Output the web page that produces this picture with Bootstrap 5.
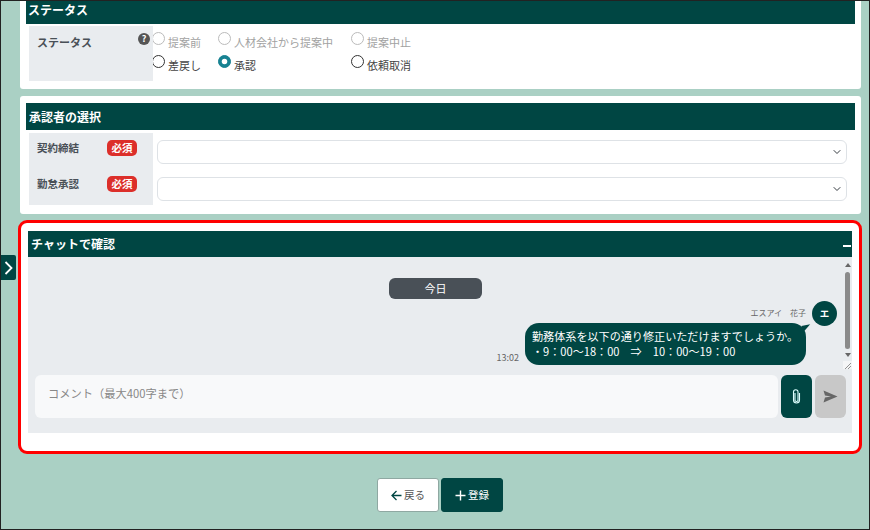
<!DOCTYPE html>
<html lang="ja">
<head>
  <meta charset="UTF-8">
  <meta name="viewport" content="width=device-width, initial-scale=1.0">
  <title>チャットで確認</title>
  <link href="https://cdn.jsdelivr.net/npm/bootstrap@5.3.0/dist/css/bootstrap.min.css" rel="stylesheet">
  <style>
    html, body { height: 530px; overflow: hidden; }
    body { background: #aad0c4; font-family: "Noto Sans CJK JP", "Liberation Sans", sans-serif; font-size: 11px; color: #343a40; }
    .page-frame { height: 530px; border: 1px solid #222; padding: 0 8px 0 19px; position: relative; }
    .box { background: #fff; border-radius: 3px; padding: 7px 6px 0 6px; }
    .box-first { height: 88px; padding-top: 0; border-radius: 0 0 3px 3px; }
    .box-second { height: 118px; margin-top: 7px; }
    .box-chat { height: 234px; margin: 6px -1px 0 -2px; border: 3px solid #f00; border-radius: 9px; padding: 8px 7px 0 7px; }
    .head-bar { background: #004643; color: #fff; font-weight: 700; font-size: 12px; height: 27px; line-height: 27px; padding-left: 3px; display: flex; justify-content: space-between; }
    .box-first .head-bar { height: 23px; line-height: 18px; margin-bottom: 2px; padding-left: 2px; }
    .box-chat .head-bar { height: 26px; line-height: 26px; }
    .head-minus { width: 8px; height: 2px; background: #fff; margin: 14px 1px 0 0; }
    .side-cell { background: #e9ecef; width: 124px; margin-left: 3px; font-weight: 700; color: #495057; flex-shrink: 0; }
    .status-cell { height: 55px; padding: 8px 9px 0 8px; position: relative; }
    .help-dot { position: absolute; right: 3px; top: 7px; width: 12px; height: 12px; border-radius: 50%; background: #555; color: #fff; font-size: 9px; line-height: 12px; text-align: center; font-weight: 700; }
    .radio-grid { display: grid; grid-template-columns: 66px 133px 80px; grid-auto-rows: 23px; padding-top: 5px; margin-left: -1px; }
    .radio-item { display: flex; align-items: flex-start; gap: 3px; margin: 0; }
    .radio-item .form-check-input { width: 13px; height: 13px; margin: 1px 0 0 0; border-color: #333; flex-shrink: 0; opacity: 1; }
    .radio-item .form-check-input:checked { background-color: #178292; border-color: #178292; }
    .radio-item .form-check-input:disabled { border-color: #bbb; opacity: 1; }
    .radio-item span { margin-top: 3px; line-height: 16px; color: #444; }
    .radio-item.is-off span { color: #a2a2a2; }
    .approver-cell { height: 72px; padding: 7px 16px 0 8px; display: flex; flex-direction: column; gap: 20px; }
    .approver-line { display: flex; justify-content: space-between; align-items: center; height: 16px; font-size: 10.5px; }
    .need-tag { background: #dc2f2a; color: #fff; width: 30px; height: 16px; line-height: 15px; border-radius: 5px; text-align: center; font-size: 10.5px; font-weight: 700; }
    .approver-row { margin-top: 3px; }
    .select-col { flex: 1; padding: 7px 8px 0 4px; display: flex; flex-direction: column; gap: 13px; }
    .select-col .form-select { height: 24px; min-height: 24px; padding: 0 24px 0 8px; font-size: 11px; border-color: #dee2e6; background-position: right 4px center; background-size: 10px 8px; }
    .chat-area { background: #e9ecef; height: 176px; position: relative; padding: 0 6px 0 7px; }
    .chat-scroll { height: 112px; padding-top: 21px; }
    .day-pill { width: 93px; height: 21px; line-height: 20px; margin-left: 354px; text-align: center; border-radius: 6px; color: #fff; background: #495057; }
    .sender-line { display: flex; justify-content: flex-end; align-items: center; height: 25px; margin-top: 2px; padding-right: 9px; font-size: 8px; color: #666; gap: 6px; }
    .sender-name { margin-top: -1px; }
    .sender-badge { width: 25px; height: 25px; line-height: 25px; text-align: center; border-radius: 50%; background: #004643; color: #fff; font-weight: 700; font-size: 9.5px; }
    .msg-line { display: flex; justify-content: flex-end; align-items: flex-end; gap: 6px; padding-right: 40px; margin-top: -3px; }
    .msg-time { font-size: 9px; color: #666; line-height: 13px; margin-bottom: 1px; }
    .msg-bubble { width: 281px; height: 42px; background: #004643; color: #fff; border-radius: 14px; padding: 6px 7px; font-size: 11.1px; line-height: 15px; position: relative; white-space: nowrap; }
    .msg-bubble::after { content: ""; position: absolute; right: -5px; top: 2px; border-left: 9px solid #004643; border-bottom: 7px solid transparent; transform: rotate(-12deg); }
    .scroll-rail { position: absolute; right: 0; top: 0; width: 9px; height: 112px; display: flex; flex-direction: column; align-items: center; }
    .scroll-thumb { width: 5px; height: 77px; border-radius: 3px; background: #8a8a8a; margin: 5px 0 4px; }
    .arrow-up { width: 0; height: 0; margin-top: 6px; border: 3px solid transparent; border-top: 0; border-bottom: 4px solid #666; }
    .arrow-down { width: 0; height: 0; border: 3px solid transparent; border-bottom: 0; border-top: 4px solid #666; }
    .grip { position: absolute; right: 0; bottom: 0; background: #f4f5f6; }
    .input-line { display: flex; gap: 3px; margin-top: 6px; }
    .comment-box { width: 743px; height: 43px; flex-shrink: 0; border: 0; border-radius: 6px; background: #f8f9fa; font-size: 11.25px; padding: 8px 13px; line-height: 20px; resize: none; }
    .comment-box::placeholder { color: #888; }
    .icon-btn { width: 31px; height: 43px; flex-shrink: 0; padding: 0; border: 0; border-radius: 6px; display: flex; align-items: center; justify-content: center; }
    .attach-btn, .attach-btn:hover { background: #004643; }
    .send-btn, .send-btn:hover { background: #c8c8c8; }
    .foot-line { display: flex; justify-content: center; gap: 2px; margin-top: 24px; padding-right: 1px; }
    .foot-btn { width: 62px; height: 34px; padding: 0; font-size: 10.5px; border-radius: 3px; display: flex; align-items: center; justify-content: center; gap: 2px; }
    .foot-back, .foot-back:hover { background: #fff; border: 1px solid #8fa8a2; color: #555; }
    .foot-save, .foot-save:hover { background: #004643; border: 1px solid #004643; color: #fff; }
    .side-toggle { position: absolute; left: 0; top: 254px; width: 15px; height: 25px; background: #004643; border-radius: 0 2px 2px 0; display: flex; align-items: center; justify-content: center; }
  </style>
</head>
<body>
  <div class="page-frame">
    <a class="side-toggle" href="#">
      <svg width="9" height="14" viewBox="0 0 9 14"><path d="M1.5 1 L7.5 7 L1.5 13" fill="none" stroke="#fff" stroke-width="1.8"/></svg>
    </a>

    <div class="box box-first">
      <div class="head-bar">ステータス</div>
      <div class="d-flex">
        <div class="side-cell status-cell">ステータス<span class="help-dot">?</span></div>
        <div class="radio-grid">
          <label class="radio-item is-off"><input class="form-check-input" type="radio" disabled><span>提案前</span></label>
          <label class="radio-item is-off"><input class="form-check-input" type="radio" disabled><span>人材会社から提案中</span></label>
          <label class="radio-item is-off"><input class="form-check-input" type="radio" disabled><span>提案中止</span></label>
          <label class="radio-item"><input class="form-check-input" type="radio" name="st"><span>差戻し</span></label>
          <label class="radio-item"><input class="form-check-input" type="radio" name="st" checked><span>承認</span></label>
          <label class="radio-item"><input class="form-check-input" type="radio" name="st"><span>依頼取消</span></label>
        </div>
      </div>
    </div>

    <div class="box box-second">
      <div class="head-bar">承認者の選択</div>
      <div class="d-flex approver-row">
        <div class="side-cell approver-cell">
          <div class="approver-line">契約締結<span class="need-tag">必須</span></div>
          <div class="approver-line">勤怠承認<span class="need-tag">必須</span></div>
        </div>
        <div class="select-col">
          <select class="form-select"><option></option></select>
          <select class="form-select"><option></option></select>
        </div>
      </div>
    </div>

    <div class="box box-chat">
      <div class="head-bar">チャットで確認<span class="head-minus"></span></div>
      <div class="chat-area">
        <div class="chat-scroll">
          <div class="day-pill">今日</div>
          <div class="sender-line"><span class="sender-name">エスアイ　花子</span><span class="sender-badge">エ</span></div>
          <div class="msg-line">
            <span class="msg-time">13:02</span>
            <div class="msg-bubble">勤務体系を以下の通り修正いただけますでしょうか。<br>・9：00～18：00　⇒　10：00～19：00</div>
          </div>
        </div>
        <div class="scroll-rail">
          <span class="arrow-up"></span>
          <span class="scroll-thumb"></span>
          <span class="arrow-down"></span>
          <svg class="grip" width="9" height="8" viewBox="0 0 9 8"><path d="M2 8 L8 2 M5 8 L8 5" stroke="#777" stroke-width="0.8"/></svg>
        </div>
        <div class="input-line">
          <textarea class="comment-box" placeholder="コメント（最大400字まで）"></textarea>
          <button class="btn icon-btn attach-btn" type="button" aria-label="添付">
            <svg width="9" height="15" viewBox="0 0 9 15"><path d="M3 4 V11 a1.5 1.5 0 0 0 3 0 V3 a2 2 0 0 0 -4.5 0 V11 a3 3 0 0 0 6 0 V4" fill="none" stroke="#dff" stroke-width="1.1"/></svg>
          </button>
          <button class="btn icon-btn send-btn" type="button" aria-label="送信">
            <svg width="15" height="13" viewBox="0 0 15 13"><path d="M0.5 0.5 L14.5 6.5 L0.5 12.5 L2 7.5 L8 6.5 L2 5.5 Z" fill="#666"/></svg>
          </button>
        </div>
      </div>
    </div>

    <div class="foot-line">
      <a class="btn foot-btn foot-back" href="#">
        <svg width="11" height="11" viewBox="0 0 11 11"><path d="M5.5 1 L1 5.5 L5.5 10 M1 5.5 H10.5" fill="none" stroke="#004643" stroke-width="1.3"/></svg>戻る</a>
      <a class="btn foot-btn foot-save" href="#">
        <svg width="11" height="11" viewBox="0 0 11 11"><path d="M5.5 0.5 V10.5 M0.5 5.5 H10.5" fill="none" stroke="#fff" stroke-width="1.4"/></svg>登録</a>
    </div>
  </div>
</body>
</html>
